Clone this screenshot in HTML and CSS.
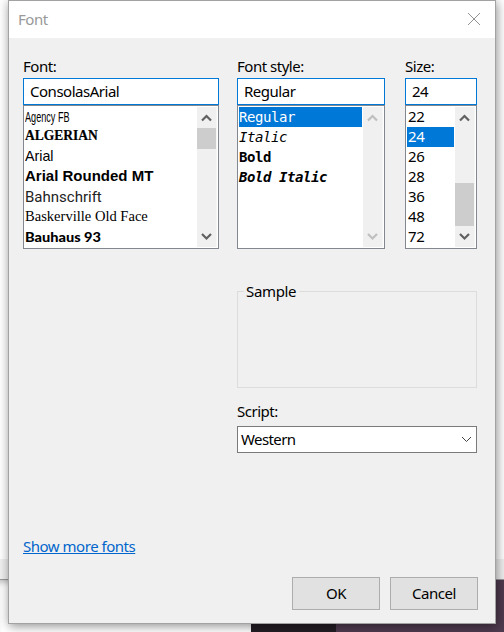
FILE: index.html
```html
<!DOCTYPE html>
<html lang="en">
<head>
<meta charset="utf-8">
<title>Font</title>
<link rel="stylesheet" href="styles.css">
</head>
<body>
<div class="backdrop">
  <div class="page"></div>
  <div class="status"></div>
  <div class="desk"><i class="light"></i><i class="dark"></i><i class="plum"></i></div>
</div>
<main class="dialog">
  <header class="titlebar"><span>Font</span>
    <svg width="14" height="14" viewBox="0 0 14 14"><path d="M1 1L13 13M13 1L1 13"/></svg>
  </header>
  <section class="pickers">
    <div class="picker">
      <label>Font:</label>
      <div class="edit"><span>ConsolasArial</span></div>
      <div class="list">
        <ul>
          <li><span class="agency">Agency FB</span></li>
          <li><span class="algerian">ALGERIAN</span></li>
          <li><span class="arial">Arial</span></li>
          <li><span class="rounded">Arial Rounded MT</span></li>
          <li><span class="bahn">Bahnschrift</span></li>
          <li><span class="bask">Baskerville Old Face</span></li>
          <li><span class="bauhaus">Bauhaus 93</span></li>
        </ul>
        <div class="scroll">
          <svg viewBox="0 0 19 21"><path d="M5 13.500L9.500 9L14 13.500"/></svg>
          <div class="track"><div class="thumb near-top"></div></div>
          <svg viewBox="0 0 19 21"><path d="M5 8L9.500 12.500L14 8"/></svg>
        </div>
      </div>
    </div>
    <div class="picker">
      <label>Font style:</label>
      <div class="edit"><span>Regular</span></div>
      <div class="list">
        <ul class="mono">
          <li class="selected">Regular</li>
          <li class="italic">Italic</li>
          <li class="bold">Bold</li>
          <li class="bold italic">Bold Italic</li>
        </ul>
        <div class="scroll disabled">
          <svg viewBox="0 0 19 21"><path d="M5 13.500L9.500 9L14 13.500"/></svg>
          <div class="track"></div>
          <svg viewBox="0 0 19 21"><path d="M5 8L9.500 12.500L14 8"/></svg>
        </div>
      </div>
    </div>
    <div class="picker">
      <label>Size:</label>
      <div class="edit"><span>24</span></div>
      <div class="list">
        <ul class="sizes">
          <li>22</li><li class="selected">24</li><li>26</li><li>28</li><li>36</li><li>48</li><li>72</li>
        </ul>
        <div class="scroll">
          <svg viewBox="0 0 19 21"><path d="M5 13.500L9.500 9L14 13.500"/></svg>
          <div class="track"><div class="thumb low"></div></div>
          <svg viewBox="0 0 19 21"><path d="M5 8L9.500 12.500L14 8"/></svg>
        </div>
      </div>
    </div>
  </section>
  <section class="lower">
    <div class="sample"><span>Sample</span></div>
    <label>Script:</label>
    <div class="select"><span>Western</span>
      <svg width="11" height="7" viewBox="0 0 11 7"><path d="M1 1L5.500 5.500L10 1"/></svg>
    </div>
  </section>
  <a class="more">Show more fonts</a>
  <footer class="actions">
    <div class="button">OK</div>
    <div class="button">Cancel</div>
  </footer>
</main>
</body>
</html>
```
FILE: styles.css
```css
* { box-sizing: border-box; }
body {
  margin: 0;
  width: 504px;
  height: 632px;
  overflow: hidden;
  position: relative;
  font: 15px/20px "Noto Sans", sans-serif;
  letter-spacing: -0.48px;
  color: #000;
}
svg { display: block; fill: none; }
.backdrop { position: absolute; inset: 0; display: flex; flex-direction: column; background: #fff; }
.page { height: 559px; }
.status { height: 21px; background: #f0f0f0; border-bottom: 1px solid #999; }
.desk { flex: 1; display: flex; }
.light { width: 251px; background: #fff; box-shadow: inset 0 6px 6px -4px #bbb; }
.dark { width: 85px; background: #231c24; }
.plum { flex: 1; background: #4f3b4f; }
.dialog {
  position: relative;
  width: 488px;
  height: 624px;
  margin-left: 8px;
  border: 1px solid #a2a2a2;
  background: #f0f0f0;
  box-shadow: 1px 2px 10px rgba(0, 0, 0, .45);
  display: flex;
  flex-direction: column;
}
.titlebar {
  height: 37px;
  padding: 0 14px 2px 9px;
  background: #fff;
  color: #999;
  display: flex;
  align-items: center;
  justify-content: space-between;
}
.titlebar svg { stroke: #929292; stroke-width: 1; }
.pickers {
  display: grid;
  grid-template-columns: 196px 148px 72px;
  column-gap: 18px;
  padding: 19px 0 0 14px;
}
.picker:last-child { margin-left: 2px; width: 72px; }
label { display: block; height: 21px; line-height: 18px; }
.edit {
  height: 27px;
  border: 1px solid #0078d7;
  background: #fff;
  padding: 2px 6px;
}
.list {
  height: 144px;
  border: 1px solid #828790;
  background: #fff;
  display: flex;
  padding: 1px;
}
ul { flex: 1; margin: 0; padding: 0 1px 0 0; list-style: none; }
li { height: 20px; white-space: nowrap; }
li span { display: block; width: max-content; transform-origin: left center; letter-spacing: 0; }
.selected { background: #0078d7; color: #fff; }
.sizes li { line-height: 19px; padding-left: 1px; letter-spacing: -.3px; }
.scroll { width: 20px; border-right: 1px solid #f6f6f6; background: #f0f0f0; display: flex; flex-direction: column; }
.scroll svg { width: 19px; height: 21px; stroke: #606060; stroke-width: 2.2; }
.disabled svg { stroke: #bfbfbf; }
.track { flex: 1; }
.thumb { background: #cdcdcd; }
.near-top { height: 21px; }
.low { height: 43px; margin-top: 55px; }
.agency { font: 14px/20px "Liberation Sans Narrow", "Liberation Sans", sans-serif; transform: scaleX(.65); }
.algerian { font: bold 14px/18px "Liberation Serif", serif; transform: scaleX(.965); -webkit-text-stroke: .2px #000; }
.arial { font: 15px/18px "Liberation Sans", sans-serif; transform: scaleX(.95); }
.rounded { font: bold 15px/18px "Liberation Sans", sans-serif; }
.bahn { font: 15px/20px Roboto, sans-serif; color: #222; }
.bask { font: 15px/18px "Liberation Serif", serif; transform: scaleX(.97); }
.bauhaus { font: 900 14px/20px Lato, sans-serif; transform: scaleX(1.04); }
.mono { font: 14px/20px "DejaVu Sans Mono", monospace; letter-spacing: -.43px; }
.bold { font-weight: bold; }
.italic { font-style: italic; }
.lower { width: 240px; margin: 42px 0 0 228px; }
.sample { height: 97px; border: 1px solid #dcdcdc; padding-left: 6px; margin-bottom: 14px; }
.sample span { display: block; width: 55px; margin-top: -11px; padding-left: 2px; background: #f0f0f0; letter-spacing: -.35px; }
.lower label { height: 24px; }
.select {
  height: 27px;
  border: 1px solid #7a7a7a;
  background: #fff;
  padding: 0 4px 1px 3px;
  display: flex;
  align-items: center;
  justify-content: space-between;
}
.select span { letter-spacing: -.6px; }
.select svg { stroke: #444; }
.more { align-self: flex-start; margin: 83px 0 0 14px; color: #0066cc; text-decoration: underline; }
.actions { display: flex; gap: 10px; margin: 21px 0 0 283px; }
.button {
  width: 88px;
  height: 33px;
  border: 1px solid #adadad;
  background: #e1e1e1;
  line-height: 31px;
  text-align: center;
}
```
